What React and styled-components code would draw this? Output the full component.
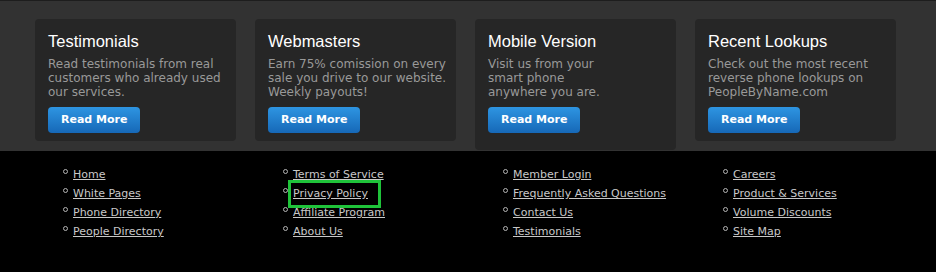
import React from "react";
import styled, { createGlobalStyle } from "styled-components";

const GlobalStyle = createGlobalStyle`
  html, body {
    margin: 0;
    padding: 0;
    background: #000;
    overflow: hidden;
  }
  body {
    font-family: "DejaVu Sans", Verdana, sans-serif;
  }
`;

const Band = styled.section`
  background: #323232;
  border-top: 1px solid #1d1d1d;
  padding: 18px 0 1px 35px;
`;

const Cards = styled.div`
  display: grid;
  grid-template-columns: repeat(4, 201px);
  column-gap: 19px;
  align-items: start;
`;

const Card = styled.div`
  background: #262626;
  border-radius: 4px;
  padding: 12px 13px ${(p) => (p.$tall ? "17px" : "8px")};
`;

const Title = styled.h3`
  margin: 0 0 5px;
  font-family: "Liberation Sans", Arial, sans-serif;
  font-weight: normal;
  font-size: 16.5px;
  line-height: 21px;
  color: #fff;
`;

const Desc = styled.p`
  margin: 0 0 8px;
  font-size: 12px;
  line-height: 14px;
  color: #999;
  white-space: nowrap;
`;

const Button = styled.a`
  display: inline-block;
  height: 26px;
  line-height: 26px;
  padding: 0 13px;
  border-radius: 4px;
  background: linear-gradient(#2e95e2, #1668b7);
  color: #fff;
  font-size: 11px;
  font-weight: bold;
  text-decoration: none;
  cursor: pointer;
`;

const Footer = styled.footer`
  background: #000;
  height: 121px;
  padding: 14px 0 0 63px;
  box-sizing: border-box;
`;

const Columns = styled.div`
  display: grid;
  grid-template-columns: repeat(3, 220px) 1fr;
`;

const List = styled.ul`
  margin: 0;
  padding: 0;
  list-style: none;
`;

const Item = styled.li`
  display: flex;
  align-items: flex-start;
  gap: 5px;
  font-size: 11px;
  line-height: 19px;

  &::before {
    content: "";
    flex: none;
    width: 3px;
    height: 3px;
    margin-top: 4px;
    border: 1px solid #b5b5b5;
    border-radius: 50%;
  }
`;

const Link = styled.a`
  position: relative;
  color: #c8c8c8;
  text-decoration: underline;
  cursor: pointer;

  ${(p) =>
    p.$marked &&
    `
    &::after {
      content: "";
      position: absolute;
      left: -5px;
      right: -13px;
      top: -4px;
      bottom: -5px;
      border: 3px solid #1fc33a;
    }
  `}
`;

const cards = [
  { title: "Testimonials", lines: ["Read testimonials from real", "customers who already used", "our services."] },
  { title: "Webmasters", lines: ["Earn 75% comission on every", "sale you drive to our website.", "Weekly payouts!"] },
  { title: "Mobile Version", lines: ["Visit us from your", "smart phone", "anywhere you are."], tall: true },
  { title: "Recent Lookups", lines: ["Check out the most recent", "reverse phone lookups on", "PeopleByName.com"] },
];

const columns = [
  ["Home", "White Pages", "Phone Directory", "People Directory"],
  ["Terms of Service", "Privacy Policy", "Affiliate Program", "About Us"],
  ["Member Login", "Frequently Asked Questions", "Contact Us", "Testimonials"],
  ["Careers", "Product & Services", "Volume Discounts", "Site Map"],
];

export default function App() {
  return (
    <>
      <GlobalStyle />
      <Band>
        <Cards>
          {cards.map((c) => (
            <Card key={c.title} $tall={c.tall}>
              <Title>{c.title}</Title>
              <Desc>
                {c.lines.map((l, i) => (
                  <React.Fragment key={i}>
                    {l}
                    {i < c.lines.length - 1 && <br />}
                  </React.Fragment>
                ))}
              </Desc>
              <Button>Read More</Button>
            </Card>
          ))}
        </Cards>
      </Band>
      <Footer>
        <Columns>
          {columns.map((col, ci) => (
            <List key={ci}>
              {col.map((name) => (
                <Item key={name}>
                  <Link $marked={name === "Privacy Policy"}>{name}</Link>
                </Item>
              ))}
            </List>
          ))}
        </Columns>
      </Footer>
    </>
  );
}
